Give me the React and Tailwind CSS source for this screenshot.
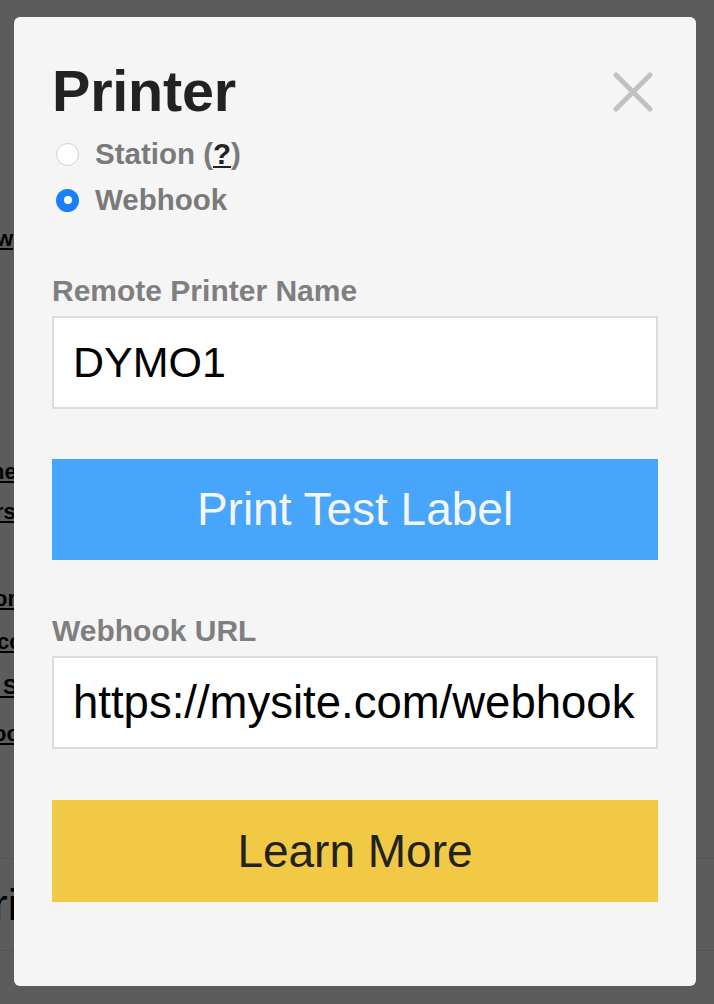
import React, { useState } from 'react';

// links down the left of the page behind the dialog; only their tail ends peek out
const pageLinks = [
  { text: 'w', cls: 'mt-[227px] -ml-[4px]' },
  { text: 'ne', cls: 'mt-[209px] -ml-[9px]' },
  { text: 'rs', cls: 'mt-[16px] -ml-[5px]' },
  { text: 'or', cls: 'mt-[63px] -ml-[6px]' },
  { text: 'co', cls: 'mt-[19px] -ml-[3px]' },
  { text: '\u00a0S', cls: 'mt-[21px] -ml-[3px]' },
  { text: 'oo', cls: 'mt-[23px] -ml-[7px]' },
];

const Radio = ({ checked, onClick, children }) => (
  <button
    type="button"
    onClick={onClick}
    className="flex h-[46px] items-center gap-[16px] pl-[4px] text-left"
  >
    {checked ? (
      <span className="flex h-[23px] w-[23px] items-center justify-center rounded-full bg-[#1a7ffb]">
        <span className="h-[8px] w-[8px] rounded-full bg-white" />
      </span>
    ) : (
      <span className="h-[23px] w-[23px] rounded-full border border-[#cfcfcf] bg-white" />
    )}
    <span className="text-[29.5px] font-bold leading-[46px] text-[#7a7a7a]">{children}</span>
  </button>
);

const App = () => {
  const [mode, setMode] = useState('webhook');
  const [printerName, setPrinterName] = useState('DYMO1');
  const [webhookUrl, setWebhookUrl] = useState('https://mysite.com/webhook');

  return (
    <div className="relative min-h-screen overflow-hidden bg-white font-['Liberation_Sans',Arial,Helvetica,sans-serif]">
      {/* Page under the dialog */}
      <div className="flex flex-col items-start">
        {pageLinks.map((l) => (
          <a
            key={l.text}
            href="#"
            className={`${l.cls} whitespace-nowrap text-[22px] font-bold leading-[24px] text-black underline`}
          >
            {l.text}
          </a>
        ))}
      </div>
      <div className="mt-[112px] flex h-[93px] items-center border-y border-[#e8e8e8]">
        <span className="-ml-[7px] whitespace-nowrap text-[44px] leading-none text-black">ri</span>
      </div>

      {/* Backdrop + dialog */}
      <div className="fixed inset-0 bg-black/[0.64] px-[14px] pt-[17px]">
        <div className="flex h-[969px] w-[682px] flex-col rounded-[6px] bg-[#f5f5f5] px-[38px] pt-[46px]">
          <div className="flex items-start justify-between">
            <h1 className="text-[57.5px] font-bold leading-[57px] tracking-[-0.2px] text-[#222]">
              Printer
            </h1>
            <button type="button" className="mr-[5px] mt-[9px]" aria-label="Close">
              <svg width="40" height="40" viewBox="0 0 40 40" fill="none">
                <path
                  d="M3 3 L37 37 M37 3 L3 37"
                  stroke="#c2c2c2"
                  strokeWidth="5"
                  strokeLinecap="round"
                />
              </svg>
            </button>
          </div>

          <div className="mt-[11px] flex flex-col">
            <Radio checked={mode === 'station'} onClick={() => setMode('station')}>
              Station (<span className="text-[#222] underline">?</span>)
            </Radio>
            <Radio checked={mode === 'webhook'} onClick={() => setMode('webhook')}>
              Webhook
            </Radio>
          </div>

          <label className="mt-[53px] text-[30px] font-bold leading-[30px] text-[#7f7f7f]">
            Remote Printer Name
          </label>
          <input
            className="mt-[10px] h-[93px] w-full border-2 border-[#dcdcdc] bg-white px-[19px] text-[43px] text-black outline-none"
            value={printerName}
            onChange={(e) => setPrinterName(e.target.value)}
          />

          <button
            type="button"
            className="mt-[50px] h-[101px] w-full bg-[#47a5fb] text-[46px] text-[#f5f5f5]"
          >
            Print Test Label
          </button>

          <label className="mt-[56px] text-[30px] font-bold leading-[30px] text-[#7f7f7f]">
            Webhook URL
          </label>
          <input
            className="mt-[10px] h-[93px] w-full border-2 border-[#dcdcdc] bg-white px-[19px] text-[45.5px] text-black outline-none"
            value={webhookUrl}
            onChange={(e) => setWebhookUrl(e.target.value)}
          />

          <button
            type="button"
            className="mt-[51px] h-[102px] w-full bg-[#f1c944] text-[46px] text-[#222]"
          >
            Learn More
          </button>
        </div>
      </div>
    </div>
  );
};

export default App;
